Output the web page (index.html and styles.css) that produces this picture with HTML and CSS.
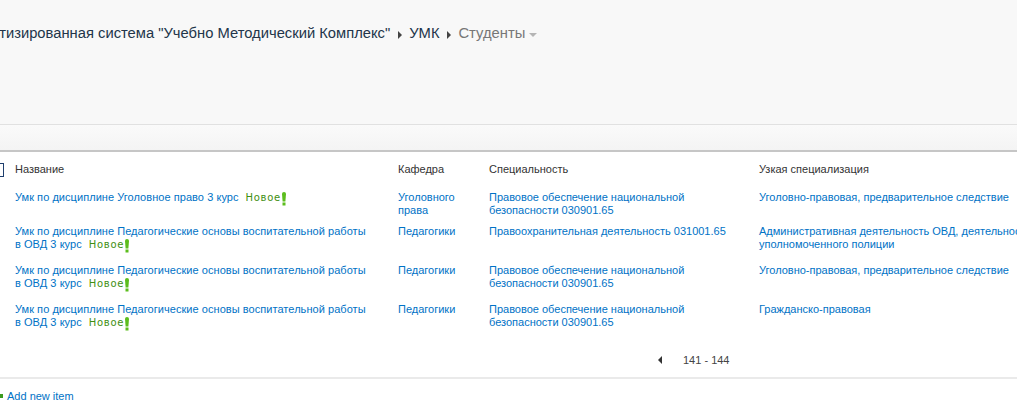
FILE: index.html
```html
<!DOCTYPE html>
<html lang="ru">
<head>
<meta charset="utf-8">
<title>Студенты</title>
<link rel="stylesheet" href="styles.css">
</head>
<body>
<div class="top">
  <nav class="crumbs">
    <a class="crumb site" href="#">Автоматизированная система "Учебно Методический Комплекс"</a>
    <span class="sep"></span>
    <a class="crumb" href="#">УМК</a>
    <span class="sep"></span>
    <span class="crumb current">Студенты</span>
    <span class="drop"></span>
  </nav>
</div>
<div class="band"></div>
<div class="list">
  <table class="grid">
    <colgroup>
      <col class="c-check"><col class="c-title"><col class="c-kaf"><col class="c-spec"><col class="c-uzk">
    </colgroup>
    <thead>
      <tr>
        <th><span class="checkbox"></span></th>
        <th>Название</th>
        <th>Кафедра</th>
        <th>Специальность</th>
        <th>Узкая специализация</th>
      </tr>
    </thead>
    <tbody>
      <tr>
        <td></td>
        <td class="title"><a href="#">Умк по дисциплине Уголовное право 3 курс</a><span class="new">Новое<svg class="bang" width="6" height="17" viewBox="0 0 6 17"><path d="M1 2a2 2 0 0 1 4 0l-0.6 7.5h-2.8z" fill="#5cbd1d"/><rect x="1.5" y="10.5" width="3" height="3" fill="#5cbd1d"/></svg></span></td>
        <td><a href="#">Уголовного права</a></td>
        <td><a href="#">Правовое обеспечение национальной безопасности 030901.65</a></td>
        <td><a href="#">Уголовно-правовая, предварительное следствие</a></td>
      </tr>
      <tr>
        <td></td>
        <td class="title"><a href="#">Умк по дисциплине Педагогические основы воспитательной работы в ОВД 3 курс</a><span class="new">Новое<svg class="bang" width="6" height="17" viewBox="0 0 6 17"><path d="M1 2a2 2 0 0 1 4 0l-0.6 7.5h-2.8z" fill="#5cbd1d"/><rect x="1.5" y="10.5" width="3" height="3" fill="#5cbd1d"/></svg></span></td>
        <td><a href="#">Педагогики</a></td>
        <td><a href="#">Правоохранительная деятельность 031001.65</a></td>
        <td><a href="#">Административная деятельность ОВД, деятельность участкового уполномоченного полиции</a></td>
      </tr>
      <tr>
        <td></td>
        <td class="title"><a href="#">Умк по дисциплине Педагогические основы воспитательной работы в ОВД 3 курс</a><span class="new">Новое<svg class="bang" width="6" height="17" viewBox="0 0 6 17"><path d="M1 2a2 2 0 0 1 4 0l-0.6 7.5h-2.8z" fill="#5cbd1d"/><rect x="1.5" y="10.5" width="3" height="3" fill="#5cbd1d"/></svg></span></td>
        <td><a href="#">Педагогики</a></td>
        <td><a href="#">Правовое обеспечение национальной безопасности 030901.65</a></td>
        <td><a href="#">Уголовно-правовая, предварительное следствие</a></td>
      </tr>
      <tr>
        <td></td>
        <td class="title"><a href="#">Умк по дисциплине Педагогические основы воспитательной работы в ОВД 3 курс</a><span class="new">Новое<svg class="bang" width="6" height="17" viewBox="0 0 6 17"><path d="M1 2a2 2 0 0 1 4 0l-0.6 7.5h-2.8z" fill="#5cbd1d"/><rect x="1.5" y="10.5" width="3" height="3" fill="#5cbd1d"/></svg></span></td>
        <td><a href="#">Педагогики</a></td>
        <td><a href="#">Правовое обеспечение национальной безопасности 030901.65</a></td>
        <td><a href="#">Гражданско-правовая</a></td>
      </tr>
    </tbody>
  </table>
  <div class="pager">
    <span class="prev"></span>
    <span class="range">141 - 144</span>
  </div>
  <div class="addnew">
    <span class="plus"></span>
    <a href="#">Add new item</a>
  </div>
</div>
</body>
</html>
```

FILE: styles.css
```css
html, body {
  margin: 0;
  padding: 0;
  background: #ffffff;
  overflow: hidden;
  font-family: "Liberation Sans", Arial, sans-serif;
}

a {
  text-decoration: none;
}

.top {
  height: 125px;
  background: #f8f8f8;
  border-bottom: 1px solid #e1e1e1;
  box-sizing: border-box;
  padding-top: 24px;
}

.crumbs {
  display: flex;
  align-items: center;
  white-space: nowrap;
  font-size: 14.75px;
  line-height: 19px;
  margin-left: -51px;
}

.crumb {
  color: #22354a;
}

.crumb.current {
  color: #777777;
}

.sep {
  width: 0;
  height: 0;
  border-top: 4px solid transparent;
  border-bottom: 4px solid transparent;
  border-left: 4px solid #444444;
  margin: 2px 7px 0 8px;
}

.drop {
  width: 0;
  height: 0;
  border-left: 4px solid transparent;
  border-right: 4px solid transparent;
  border-top: 4px solid #b5b5b5;
  margin: 3px 0 0 4px;
}

.band {
  height: 25px;
  background: linear-gradient(#fafafa, #f4f4f4);
  border-bottom: 2px solid #c6c6c6;
}

.grid {
  table-layout: fixed;
  border-collapse: collapse;
  width: 1182px;
  margin-left: -11px;
  font-size: 11px;
  line-height: 13px;
}

.c-check { width: 18px; }
.c-title { width: 383px; }
.c-kaf { width: 91px; }
.c-spec { width: 270px; }
.c-uzk { width: 420px; }

.grid th {
  text-align: left;
  font-weight: normal;
  color: #333333;
  height: 35px;
  padding: 0 8px;
  vertical-align: middle;
}

.grid th:first-child {
  padding: 0 0 0 2px;
}

.checkbox {
  display: block;
  width: 11px;
  height: 12px;
  border: 1px solid #1f3f6e;
  background: #ffffff;
}

.grid td {
  vertical-align: top;
  padding: 4px 8px;
}

.grid td:first-child {
  padding: 0;
}

.grid td.title {
  padding-right: 20px;
  letter-spacing: 0.05px;
}

.grid td a {
  color: #0072c6;
}

.new {
  color: #3f8f12;
  font-family: "DejaVu Sans", Verdana, sans-serif;
  font-size: 10px;
  letter-spacing: 0.7px;
  margin-left: 7px;
  white-space: nowrap;
}

.bang {
  vertical-align: -8px;
  margin-left: 0;
}

.pager {
  display: flex;
  align-items: flex-start;
  height: 41px;
  padding: 16px 0 0 658px;
  border-bottom: 2px solid #eaeaea;
  box-sizing: border-box;
}

.prev {
  width: 0;
  height: 0;
  border-top: 4px solid transparent;
  border-bottom: 4px solid transparent;
  border-right: 4px solid #333333;
  margin-top: 2px;
}

.range {
  margin-left: 21px;
  font-size: 11px;
  line-height: 13px;
  color: #444444;
}

.addnew {
  display: flex;
  align-items: center;
  padding-top: 11px;
  font-size: 11px;
}

.plus {
  width: 3px;
  height: 4px;
  background: #3c9a1f;
  margin-right: 4px;
}

.addnew a {
  color: #0072c6;
}
```
